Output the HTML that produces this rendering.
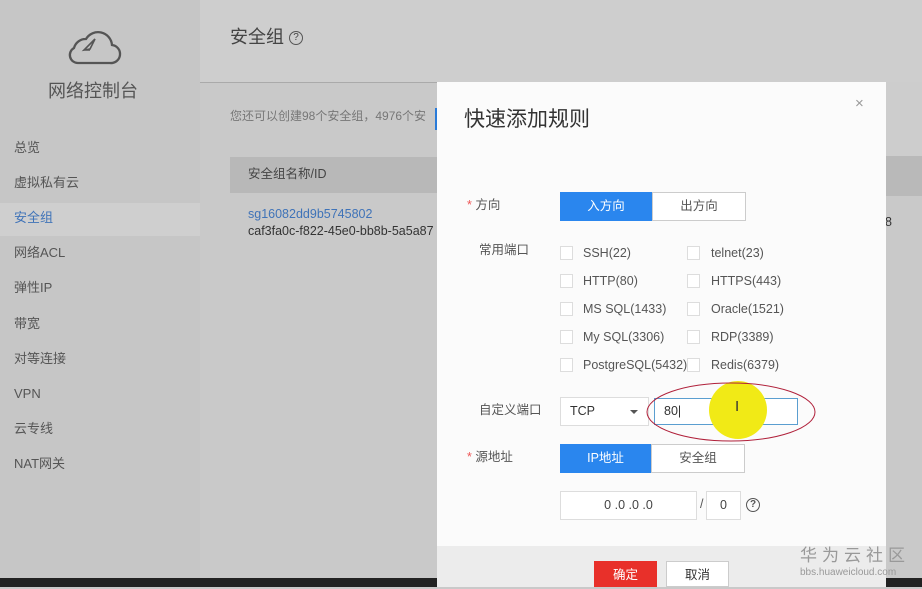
<!DOCTYPE html>
<html><head><meta charset="utf-8"><style>
*{margin:0;padding:0;box-sizing:border-box}
body{width:922px;height:587px;overflow:hidden;position:relative;background:#c9c9c9;font-family:"Liberation Sans","Noto Sans CJK SC",sans-serif;color:#555;line-height:1.15}
.a{position:absolute;white-space:nowrap}
.side{left:0;top:0;width:200px;height:587px;background:#c6c6c6}
.nav{left:14px;font-size:13px;color:#555}
.cb{position:absolute;width:13px;height:14px;border:1px solid #ddd;background:#fff}
.lbl{font-size:12.5px;color:#555}
</style></head><body>
<div class="a side"></div>
<div class="a" style="left:200px;top:0;width:722px;height:82px;background:#cecece"></div>
<div class="a" style="left:200px;top:82px;width:237px;height:1px;background:#aaa"></div>
<svg class="a" style="left:66px;top:28px" width="56" height="38" viewBox="0 0 56 38"><path d="M12 35 H44 A9 9 0 0 0 46 17 A14 14 0 0 0 20 11 A12 12 0 0 0 8 20 A8 8 0 0 0 12 35Z" fill="none" stroke="#555" stroke-width="2.3"/><path d="M24 21 L29 11 L18 22 Z M19 22 L24 22" fill="none" stroke="#555" stroke-width="1.6"/></svg>
<div class="a" style="left:48px;top:81px;font-size:18px;color:#555">网络控制台</div>
<div class="a nav" style="top:141px">总览</div>
<div class="a nav" style="top:176px">虚拟私有云</div>
<div class="a" style="left:0;top:203px;width:200px;height:33px;background:#cfcfcf"></div>
<div class="a nav" style="top:211px;color:#3f73b8">安全组</div>
<div class="a nav" style="top:246px">网络ACL</div>
<div class="a nav" style="top:281px">弹性IP</div>
<div class="a nav" style="top:317px">带宽</div>
<div class="a nav" style="top:352px">对等连接</div>
<div class="a nav" style="top:387px">VPN</div>
<div class="a nav" style="top:422px">云专线</div>
<div class="a nav" style="top:457px">NAT网关</div>
<div class="a" style="left:230px;top:27px;font-size:18px;color:#444">安全组 <span style="border:1.5px solid #555;border-radius:50%;display:inline-block;width:14px;height:14px;line-height:12px;text-align:center;font-size:10px;vertical-align:3px">?</span></div>
<div class="a" style="left:230px;top:110px;font-size:12px;color:#777">您还可以创建98个安全组，4976个安</div>
<div class="a" style="left:435px;top:108px;width:3px;height:22px;background:#2a7bd8"></div>
<div class="a" style="left:230px;top:157px;width:207px;height:36px;background:#b8b8b8"></div>
<div class="a" style="left:248px;top:167px;font-size:12.5px;color:#444">安全组名称/ID</div>
<div class="a" style="left:248px;top:207px;font-size:12.5px;color:#3f73b8">sg16082dd9b5745802</div>
<div class="a" style="left:248px;top:224px;font-size:12.5px;color:#333">caf3fa0c-f822-45e0-bb8b-5a5a87</div>
<div class="a" style="left:886px;top:82px;width:36px;height:78px;background:#cdcdcd"></div>
<div class="a" style="left:886px;top:156px;width:36px;height:40px;background:#b9b9b9"></div>
<div class="a" style="left:885px;top:215px;font-size:12.5px;color:#333">8</div>
<div class="a" style="left:437px;top:82px;width:449px;height:505px;background:#fbfbfb"></div>
<div class="a" style="left:437px;top:546px;width:449px;height:41px;background:#ececec"></div>
<div class="a" style="left:464px;top:108px;font-size:21px;color:#333">快速添加规则</div>
<div class="a" style="left:855px;top:95px;font-size:15px;color:#999">×</div>
<div class="a lbl" style="left:467px;top:198px"><span style="color:#e55">*</span> 方向</div>
<div class="a" style="left:560px;top:192px;width:92px;height:29px;background:#2a86ee;color:#fff;font-size:12.5px;text-align:center;line-height:29px">入方向</div>
<div class="a" style="left:652px;top:192px;width:94px;height:29px;border:1px solid #ccc;background:#fff;font-size:12.5px;text-align:center;line-height:27px">出方向</div>
<div class="a lbl" style="left:479px;top:243px">常用端口</div>
<div class="cb" style="left:560px;top:246px"></div><div class="a lbl" style="left:583px;top:246px">SSH(22)</div>
<div class="cb" style="left:687px;top:246px"></div><div class="a lbl" style="left:711px;top:246px">telnet(23)</div>
<div class="cb" style="left:560px;top:274px"></div><div class="a lbl" style="left:583px;top:274px">HTTP(80)</div>
<div class="cb" style="left:687px;top:274px"></div><div class="a lbl" style="left:711px;top:274px">HTTPS(443)</div>
<div class="cb" style="left:560px;top:302px"></div><div class="a lbl" style="left:583px;top:302px">MS SQL(1433)</div>
<div class="cb" style="left:687px;top:302px"></div><div class="a lbl" style="left:711px;top:302px">Oracle(1521)</div>
<div class="cb" style="left:560px;top:330px"></div><div class="a lbl" style="left:583px;top:330px">My SQL(3306)</div>
<div class="cb" style="left:687px;top:330px"></div><div class="a lbl" style="left:711px;top:330px">RDP(3389)</div>
<div class="cb" style="left:560px;top:358px"></div><div class="a lbl" style="left:583px;top:358px">PostgreSQL(5432)</div>
<div class="cb" style="left:687px;top:358px"></div><div class="a lbl" style="left:711px;top:358px">Redis(6379)</div>
<div class="a lbl" style="left:479px;top:403px">自定义端口</div>
<div class="a" style="left:560px;top:397px;width:89px;height:29px;border:1px solid #ddd;background:#fff;font-size:12.5px;line-height:27px;padding-left:9px;color:#333">TCP<span style="position:absolute;left:69px;top:12px;border:4px solid transparent;border-top:4px solid #555"></span></div>
<div class="a" style="left:654px;top:398px;width:144px;height:27px;border:1px solid #5a9ed0;background:#fff;font-size:12.5px;line-height:25px;padding-left:9px;color:#333">80|</div>
<div class="a" style="left:709px;top:381px;width:58px;height:58px;border-radius:50%;background:#f1ea16"></div>
<div class="a" style="left:735px;top:398px;font-size:15px;color:#333">I</div>
<svg class="a" style="left:645px;top:380px" width="172" height="64"><ellipse cx="86" cy="32" rx="84" ry="29" fill="none" stroke="#b0203a" stroke-width="1"/></svg>
<div class="a lbl" style="left:467px;top:450px"><span style="color:#e55">*</span> 源地址</div>
<div class="a" style="left:560px;top:444px;width:91px;height:29px;background:#2a86ee;color:#fff;font-size:12.5px;text-align:center;line-height:29px">IP地址</div>
<div class="a" style="left:651px;top:444px;width:94px;height:29px;border:1px solid #ccc;background:#fff;font-size:12.5px;text-align:center;line-height:27px">安全组</div>
<div class="a" style="left:560px;top:491px;width:137px;height:29px;border:1px solid #ddd;background:#fff;font-size:12.5px;text-align:center;line-height:27px;color:#444">0 .0 .0 .0</div>
<div class="a lbl" style="left:700px;top:497px">/</div>
<div class="a" style="left:706px;top:491px;width:35px;height:29px;border:1px solid #ddd;background:#fff;font-size:12.5px;text-align:center;line-height:27px;color:#444">0</div>
<div class="a" style="left:746px;top:498px;width:14px;height:14px;border:1.5px solid #555;border-radius:50%;font-size:10px;text-align:center;line-height:11px;color:#555;font-weight:bold">?</div>
<div class="a" style="left:594px;top:561px;width:63px;height:26px;background:#e8302a;color:#fff;font-size:12.5px;text-align:center;line-height:28px">确定</div>
<div class="a" style="left:666px;top:561px;width:63px;height:26px;border:1px solid #ccc;background:#fff;font-size:12.5px;text-align:center;line-height:26px;color:#333">取消</div>
<div class="a" style="left:800px;top:546px;font-size:17px;color:#999;letter-spacing:5px">华为云社区</div>
<div class="a" style="left:800px;top:567px;font-size:10px;color:#999">bbs.huaweicloud.com</div>
<div class="a" style="left:0;top:578px;width:437px;height:9px;background:#222"></div>
<div class="a" style="left:886px;top:578px;width:36px;height:9px;background:#222"></div>
</body></html>
